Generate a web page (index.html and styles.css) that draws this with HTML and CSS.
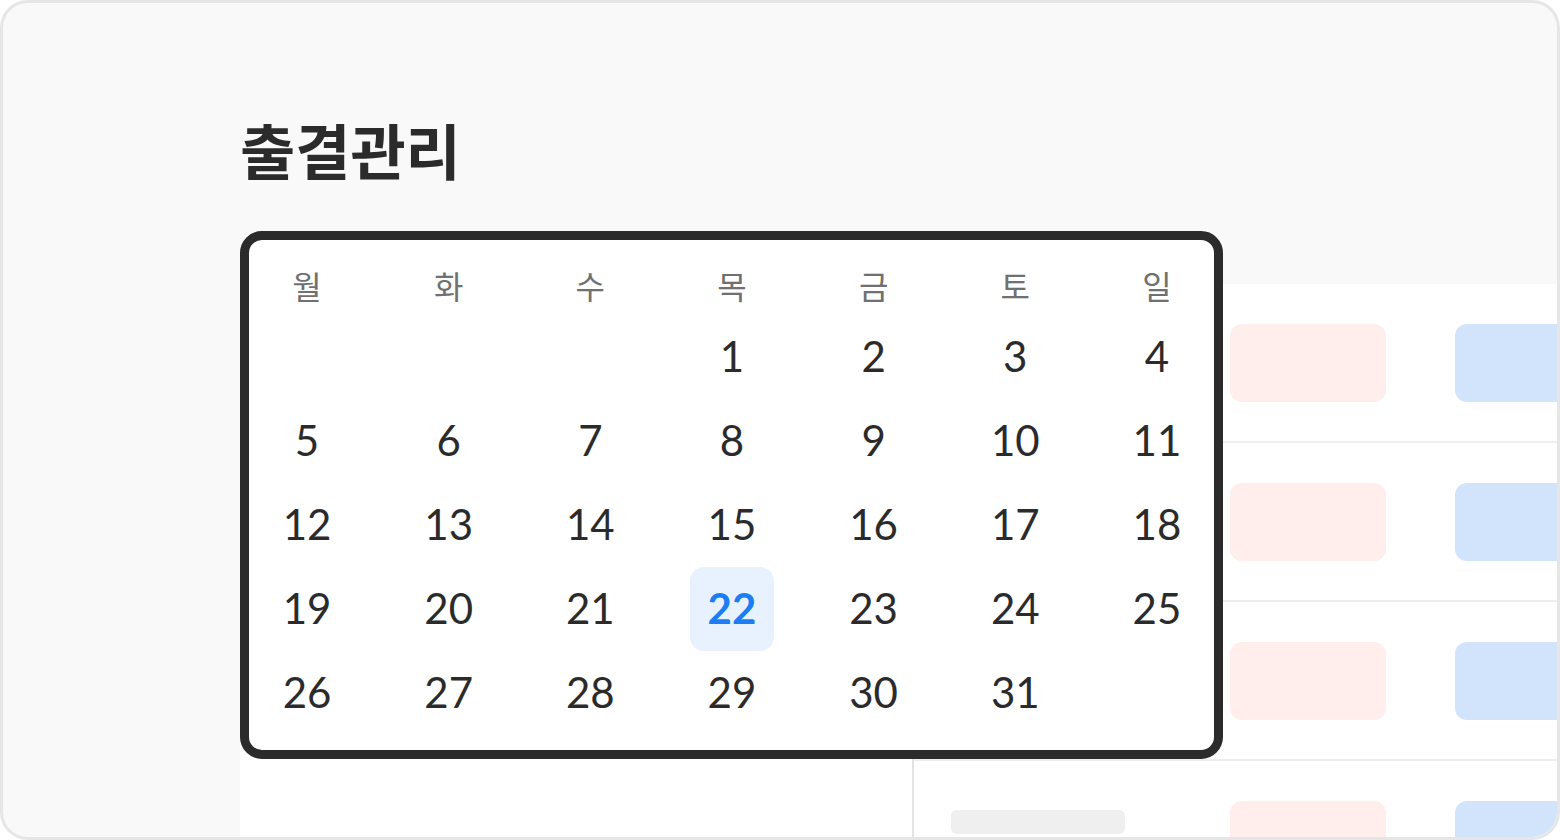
FILE: index.html
```html
<!DOCTYPE html>
<html lang="ko">
<head>
<meta charset="utf-8">
<title>출결관리</title>
<link rel="stylesheet" href="styles.css">
</head>
<body>
<div class="frame">
  <header class="top">
    <h1 class="title">출결관리</h1>
  </header>
  <div class="panel">
    <div class="panel-side"></div>
    <div class="table">
      <div class="row"><div class="bar"></div><div class="chip chip-red"></div><div class="chip chip-blue"></div></div>
      <div class="row"><div class="bar"></div><div class="chip chip-red"></div><div class="chip chip-blue"></div></div>
      <div class="row"><div class="bar"></div><div class="chip chip-red"></div><div class="chip chip-blue"></div></div>
      <div class="row"><div class="bar"></div><div class="chip chip-red"></div><div class="chip chip-blue"></div></div>
    </div>
  </div>
  <div class="calendar">
    <div class="grid">
      <span class="wd">월</span><span class="wd">화</span><span class="wd">수</span><span class="wd">목</span><span class="wd">금</span><span class="wd">토</span><span class="wd">일</span>
      <span class="d"></span><span class="d"></span><span class="d"></span><span class="d">1</span><span class="d">2</span><span class="d">3</span><span class="d">4</span>
      <span class="d">5</span><span class="d">6</span><span class="d">7</span><span class="d">8</span><span class="d">9</span><span class="d">10</span><span class="d">11</span>
      <span class="d">12</span><span class="d">13</span><span class="d">14</span><span class="d">15</span><span class="d">16</span><span class="d">17</span><span class="d">18</span>
      <span class="d">19</span><span class="d">20</span><span class="d">21</span><span class="d today">22</span><span class="d">23</span><span class="d">24</span><span class="d">25</span>
      <span class="d">26</span><span class="d">27</span><span class="d">28</span><span class="d">29</span><span class="d">30</span><span class="d">31</span><span class="d"></span>
    </div>
  </div>
</div>
</body>
</html>
```

FILE: styles.css
```css
* { box-sizing: border-box; }
html, body { margin: 0; padding: 0; }
body {
  width: 1560px;
  height: 840px;
  background: #ffffff;
  font-family: "Lato", "Noto Sans CJK KR", sans-serif;
  color: #2b2b2b;
}
.frame {
  position: relative;
  width: 1560px;
  height: 840px;
  border: 3px solid #e6e6e6;
  border-radius: 28px;
  background: #f9f9f9;
  overflow: hidden;
  display: flex;
  flex-direction: column;
}
.top {
  height: 281px;
  flex: none;
  padding-left: 237px;
}
.title {
  margin: 116px 0 0 0;
  font-family: "Noto Sans CJK KR", sans-serif;
  font-weight: 700;
  font-size: 60px;
  line-height: 1;
  letter-spacing: 0;
  color: #2b2b2b;
}
.panel {
  flex: 1;
  margin-left: 237px;
  background: #ffffff;
  display: flex;
}
.panel-side {
  width: 672px;
  flex: none;
}
.table {
  flex: 1;
  border-left: 2px solid #e3e3e3;
  display: flex;
  flex-direction: column;
}
.row {
  height: 159px;
  flex: none;
  border-bottom: 2px solid #eeeeee;
  display: flex;
  align-items: center;
  padding-left: 37px;
}
.bar {
  width: 174px;
  height: 24px;
  border-radius: 6px;
  background: #efefef;
  align-self: flex-start;
  margin-top: 49px;
  flex: none;
}
.chip {
  width: 156px;
  height: 78px;
  border-radius: 12px;
  flex: none;
}
.chip-red {
  background: #ffeeeb;
  margin-left: 105px;
}
.chip-blue {
  background: #d1e4fc;
  margin-left: 69px;
}
.calendar {
  position: absolute;
  left: 237px;
  top: 228px;
  width: 983px;
  height: 528px;
  border: 9px solid #2b2b2b;
  border-radius: 22px;
  background: #ffffff;
  padding: 19px 15px 15px 16px;
}
.grid {
  display: grid;
  grid-template-columns: repeat(7, 84px);
  grid-template-rows: 56px repeat(5, 84px);
  justify-content: space-between;
}
.wd {
  display: flex;
  align-items: center;
  justify-content: center;
  padding-bottom: 4px;
  font-family: "Noto Sans CJK KR", sans-serif;
  font-size: 32px;
  font-weight: 400;
  color: #707070;
}
.d {
  display: flex;
  align-items: center;
  justify-content: center;
  padding-bottom: 2px;
  font-family: "Lato", sans-serif;
  font-size: 42px;
  font-weight: 400;
  color: #2b2b2b;
  border-radius: 14px;
}
.today {
  background: #e8f2fe;
  color: #1c7ef2;
  font-weight: 700;
}
```
